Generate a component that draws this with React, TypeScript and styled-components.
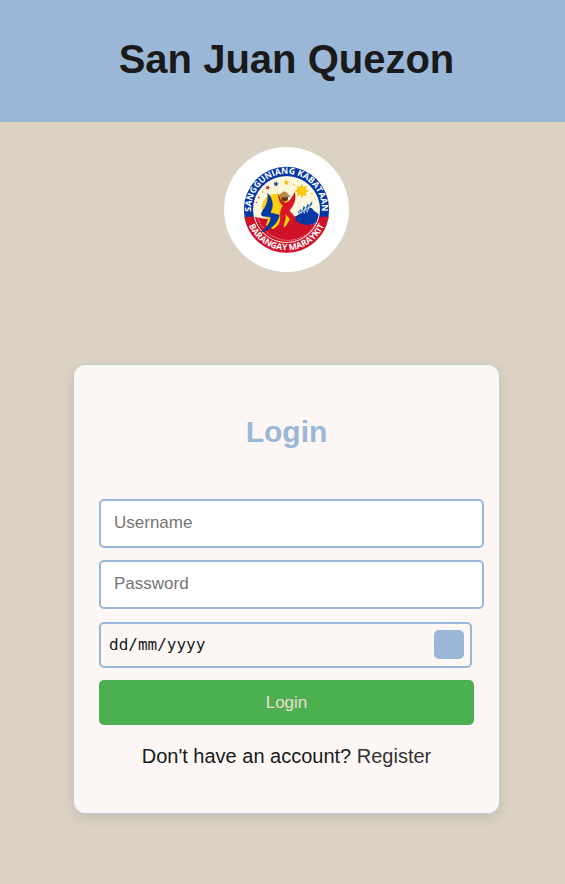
import React from 'react';
import styled, { createGlobalStyle } from 'styled-components';

const GlobalStyle = createGlobalStyle`
  * { box-sizing: border-box; }
  body {
    margin: 0;
    background: #dbd2c3;
    color: #1a1a1a;
    font-family: "Liberation Sans", Arial, sans-serif;
  }
`;

const Header = styled.header`
  background: #9ab7d7;
  padding: 35px 0 39px 8px;
  text-align: center;
`;

const SiteTitle = styled.h1`
  margin: 0;
  font-size: 40px;
  line-height: 48px;
`;

const Main = styled.main`
  display: flex;
  flex-direction: column;
  align-items: center;
  padding: 25px 0 70px 8px;
`;

const LogoFrame = styled.div`
  width: 125px;
  height: 125px;
  margin-bottom: 92px;
  border-radius: 50%;
  background: #fff;
  overflow: hidden;

  svg {
    display: block;
    width: 100%;
    height: 100%;
  }
`;

const SealText = styled.text`
  font-family: "Open Sans", "Liberation Sans", sans-serif;
  font-size: 26px;
  font-weight: 700;
  fill: #fff;
  text-anchor: middle;
`;

const Card = styled.form`
  width: 100%;
  max-width: 427px;
  padding: 48px 25px 45px;
  border: 1px solid #c1d0d6;
  border-radius: 12px;
  background: #fcf7f5;
  box-shadow: 0 4px 12px rgba(0, 0, 0, 0.1);
`;

const CardTitle = styled.h2`
  margin: 0 0 48px;
  color: #9ab7d7;
  font-size: 30px;
  line-height: 38px;
  text-align: center;
`;

const TextField = styled.input`
  display: block;
  width: calc(100% + 10px);
  height: 49px;
  margin: 0 0 12px;
  padding: 0 13px 1px;
  border: 2px solid #9ab7d7;
  border-radius: 5px;
  background: #fff;
  color: #1a1a1a;
  font: 17px "Liberation Sans", Arial, sans-serif;

  &::placeholder { color: #757575; }
`;

const DateField = styled.div`
  display: flex;
  align-items: center;
  width: calc(100% - 2px);
  height: 46px;
  margin: 13px 0 12px;
  padding: 0 6px 1px 8px;
  border: 2px solid #9ab7d7;
  border-radius: 5px;
`;

const DateInput = styled.input`
  flex: 1;
  min-width: 0;
  padding: 0;
  border: 0;
  outline: 0;
  background: transparent;
  color: #1a1a1a;
  font: 16px "DejaVu Sans Mono", monospace;

  &::placeholder { color: #1a1a1a; opacity: 1; }
`;

const PickerButton = styled.button`
  width: 30px;
  height: 29px;
  padding: 0;
  border: 0;
  border-radius: 5px;
  background: #9ab7d7;
  cursor: pointer;
`;

const SubmitButton = styled.button`
  display: block;
  width: 100%;
  height: 45px;
  border: 0;
  border-radius: 5px;
  background: #4caf50;
  color: #f0dcd5;
  font: 17px "Liberation Sans", Arial, sans-serif;
  cursor: pointer;
`;

const RegisterLine = styled.p`
  margin: 19px 0 0;
  font-size: 20px;
  line-height: 24px;
  text-align: center;
`;

const RegisterLink = styled.a`
  color: #333;
  text-decoration: none;
`;

const star = (cx: number, cy: number, r: number, turn = 0) =>
  Array.from({ length: 10 }, (_, i) => {
    const a = ((i * 36 - 90 + turn) * Math.PI) / 180;
    const q = i % 2 ? r * 0.42 : r;
    return `${cx + q * Math.cos(a)},${cy + q * Math.sin(a)}`;
  }).join(' ');

const rays = (cx: number, cy: number) =>
  Array.from({ length: 16 }, (_, i) => {
    const a = (i * 22.5 * Math.PI) / 180;
    const q = i % 2 ? 13 : 22;
    return `${cx + q * Math.cos(a)},${cy + q * Math.sin(a)}`;
  }).join(' ');

function Seal() {
  return (
    <svg viewBox="24 21 375 375" role="img" aria-label="Sangguniang Kabataan Barangay Maraykit">
      <defs>
        <clipPath id="inner"><circle cx="211.5" cy="208.5" r="98" /></clipPath>
        <path id="topArc" d="M109 237 A106.5 106.5 0 1 1 314 237" />
        <path id="bottomArc" d="M89 208.5 A122.5 122.5 0 0 0 334 208.5" />
      </defs>
      <circle cx="211.5" cy="208.5" r="128" fill="#0638a4" />
      <path d="M85 230 A128 128 0 0 0 338 230 Z" fill="#d01229" />
      <circle cx="211.5" cy="208.5" r="100" fill="#fdf8dc" />
      <g clipPath="url(#inner)">
        <path d="M108 229 C145 236 158 240 190 236 C220 226 230 232 250 243 C275 259 290 258 320 235 V320 H100 Z" fill="#d01229" />
        <circle cx="180" cy="203" r="42" fill="#fccf12" />
        <path d="M160 225 H205 L190 252 L172 268 L150 256Z" fill="#fccf12" />
        <path d="M228 232 C250 229 264 205 278 207 C284 199 290 206 294 213 C302 216 307 225 320 230 C302 256 273 262 247 247 C240 243 236 237 228 232Z" fill="#0638a4" />
        <path d="M247 219 l7 -8 5 5 5 -14 7 5 5 -12 4 5 8 -13" fill="none" stroke="#1762b8" strokeWidth="5" />
        <path d="M248 211 l7 9 4 -12 6 12 4 -18 5 15 6 -21 5 8 4 -7" fill="none" stroke="#fff" strokeWidth="2" />
        <path d="M124 230 C139 278 181 302 218 301 C266 298 289 272 301 246" fill="none" stroke="#fff" strokeWidth="2" strokeDasharray="3 3" />
      </g>
      <circle cx="211.5" cy="208.5" r="99" fill="none" stroke="#fff" strokeWidth="3" strokeDasharray="3 3" />
      <path d="M155 160 C157 180 152 195 145 205 C136 217 131 227 142 229 L164 231 C165 247 149 268 134 275 C161 274 188 247 190 225 L163 218 C174 199 171 175 155 160Z" fill="#0638a4" stroke="#063078" strokeWidth="1" />
      <path d="M205 226 L210 218 L224 235 L211 256 L203 263Z" fill="#fccf12" />
      <path d="M187 163 C188 183 193 190 201 197 C190 214 193 225 193 235 C193 252 180 269 170 274 C196 273 212 250 208 221 L222 237 C223 252 213 265 200 273 C225 272 241 250 238 232 L220 212 C235 195 241 175 236 157 C228 175 218 186 209 189 C198 184 190 175 187 163Z" fill="#da1524" stroke="#a31223" strokeWidth="1" />
      <circle cx="206" cy="174" r="10" fill="#5d341c" />
      <path d="M188 169 C194 163 198 155 206 155 C213 157 216 165 223 169 C212 174 199 174 188 169Z" fill="#b88a45" stroke="#795225" strokeWidth="1" />
      <polygon points={rays(257, 153)} fill="#fcc51b" />
      <circle cx="257" cy="153" r="12" fill="#fccf12" stroke="#f8b81c" strokeWidth="2" />
      <polygon points={star(211, 128, 10)} fill="#f8bd18" />
      <polygon points={star(180, 132, 9, 12)} fill="#173a9d" />
      <polygon points={star(155, 143, 8, 12)} fill="#d01229" />
      <polygon points={star(140, 156, 4)} fill="#f49b20" />
      <polygon points={star(128, 172, 4)} fill="#d01229" />
      <polygon points={star(122, 188, 3)} fill="#173a9d" />
      <polygon points={star(233, 133, 4)} fill="#f8bd18" />
      <polygon points={star(287, 161, 4)} fill="#f8bd18" />
      <SealText><textPath href="#topArc" startOffset="50%">SANGGUNIANG KABATAAN</textPath></SealText>
      <SealText><textPath href="#bottomArc" startOffset="50%">BARANGAY MARAYKIT</textPath></SealText>
    </svg>
  );
}

export default function App() {
  return (
    <>
      <GlobalStyle />
      <Header><SiteTitle>San Juan Quezon</SiteTitle></Header>
      <Main>
        <LogoFrame><Seal /></LogoFrame>
        <Card onSubmit={(e) => e.preventDefault()}>
          <CardTitle>Login</CardTitle>
          <TextField type="text" name="username" placeholder="Username" aria-label="Username" />
          <TextField type="password" name="password" placeholder="Password" aria-label="Password" />
          <DateField>
            <DateInput type="text" name="date" inputMode="numeric" placeholder="dd/mm/yyyy" aria-label="Date" />
            <PickerButton type="button" aria-label="Open date picker" />
          </DateField>
          <SubmitButton type="submit">Login</SubmitButton>
          <RegisterLine>
            Don't have an account? <RegisterLink href="#register">Register</RegisterLink>
          </RegisterLine>
        </Card>
      </Main>
    </>
  );
}
